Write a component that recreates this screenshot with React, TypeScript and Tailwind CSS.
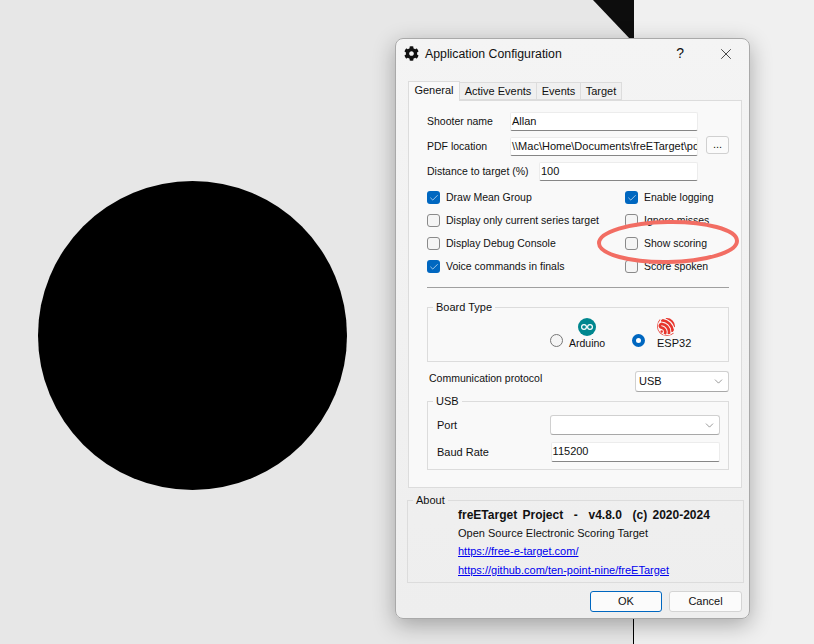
import { ChevronDown, Check, X } from "lucide-react";
import { FaCog } from "react-icons/fa";
import { SiEspressif } from "react-icons/si";
import type { ReactNode } from "react";

function CheckRow({ label, checked = false }: { label: string; checked?: boolean }) {
  return (
    <div className="flex items-center gap-[6px] h-[23px]">
      {checked ? (
        <div className="w-[13px] h-[13px] rounded-[3px] bg-[#0067c0] flex items-center justify-center">
          <Check size={10} strokeWidth={1.5} className="text-white" />
        </div>
      ) : (
        <div className="w-[13px] h-[13px] rounded-[3px] border border-[#8a8a8a] bg-[#f5f5f5]" />
      )}
      <span className="text-[10.5px]">{label}</span>
    </div>
  );
}

function Input({ value, className }: { value: string; className: string }) {
  return (
    <div
      className={`h-[19px] bg-white border-b border-b-[#868686] border-t border-x border-[#ececec] rounded-[2px] pl-[1px] leading-[17px] overflow-hidden whitespace-nowrap ${className}`}
    >
      {value}
    </div>
  );
}

function Select({ value, className }: { value: string; className: string }) {
  return (
    <div
      className={`bg-white border border-[#d0d0d0] border-b-[#a8a8a8] rounded-[3px] pl-[3px] pr-[3px] flex items-center justify-between ${className}`}
    >
      <span>{value}</span>
      <ChevronDown size={13} strokeWidth={1} className="text-[#444]" />
    </div>
  );
}

function Group({
  title,
  className,
  legendClass = "bg-[#f9f9f9]",
  children,
}: {
  title: string;
  className: string;
  legendClass?: string;
  children: ReactNode;
}) {
  return (
    <div className={`relative border border-[#dcdcdc] ${className}`}>
      <span className={`absolute -top-[9px] left-[5px] px-[3px] leading-[16px] ${legendClass}`}>{title}</span>
      {children}
    </div>
  );
}

function Dialog() {
  return (
    <div className="absolute left-[395px] top-[38px] w-[355px] h-[581px] rounded-[8px] border border-[#a9a9a9] bg-linear-to-b from-[#f4f4f4] to-[#eeeeee] shadow-[0_6px_22px_rgba(0,0,0,0.3)] text-[#111] flex flex-col">
      {/* title bar */}
      <div className="h-[29px] flex items-center pl-[8px] shrink-0">
        <FaCog size={15} className="text-[#111]" />
        <span className="ml-[6px] mt-[1px] text-[12.3px]">Application Configuration</span>
        <span className="ml-auto mr-[33px] text-[14px]">?</span>
        <X size={18} strokeWidth={1} className="mr-[14px]" />
      </div>

      {/* tabs */}
      <div className="flex items-end h-[32px] pl-[12px] shrink-0">
        <div className="w-[52px] h-[20px] bg-[#f9f9f9] border border-b-0 border-[#dcdcdc] text-center leading-[17px] relative top-px z-10">General</div>
        <div className="w-[77px] h-[18px] bg-[#f0f0f0] border-y border-r border-[#dcdcdc] text-center leading-[17px]">Active Events</div>
        <div className="w-[44px] h-[18px] bg-[#f0f0f0] border-y border-r border-[#dcdcdc] text-center leading-[17px]">Events</div>
        <div className="w-[41px] h-[18px] bg-[#f0f0f0] border-y border-r border-[#dcdcdc] text-center leading-[17px]">Target</div>
      </div>

      {/* general tab */}
      <div className="ml-[12px] mr-[7px] h-[388px] shrink-0 bg-[#f9f9f9] border border-[#dcdcdc] pl-[18px] pr-[12px] pt-[11px]">
        <div className="flex items-center h-[19px]">
          <span className="w-[83px] text-[10.5px]">Shooter name</span>
          <Input value="Allan" className="w-[188px]" />
        </div>
        <div className="flex items-center h-[19px] mt-[6px]">
          <span className="w-[83px] text-[10.5px]">PDF location</span>
          <Input value="\\Mac\Home\Documents\freETarget\pdf" className="w-[188px]" />
          <div className="ml-[8px] w-[23px] h-[18px] -mt-[3px] bg-[#fbfbfb] border border-[#d0d0d0] rounded-[3px] text-center leading-[15px]">...</div>
        </div>
        <div className="flex items-center h-[19px] mt-[6px]">
          <span className="w-[112px] whitespace-nowrap text-[10.5px]">Distance to target (%)</span>
          <Input value="100" className="w-[159px]" />
        </div>

        <div className="grid grid-cols-[198px_1fr] mt-[5px]">
          <CheckRow label="Draw Mean Group" checked />
          <CheckRow label="Enable logging" checked />
          <CheckRow label="Display only current series target" />
          <CheckRow label="Ignore misses" />
          <CheckRow label="Display Debug Console" />
          <CheckRow label="Show scoring" />
          <CheckRow label="Voice commands in finals" checked />
          <CheckRow label="Score spoken" />
        </div>

        <div className="h-px bg-[#a0a0a0] mt-[9px]" />

        {/* board type */}
        <Group title="Board Type" className="h-[55px] mt-[19px] flex">
          <div className="ml-[122px] flex items-center gap-[6px] w-[82px]">
            <div className="w-[13px] h-[13px] rounded-full border border-[#777] bg-[#f5f5f5] mt-[11px]" />
            <div className="flex flex-col items-center">
              <svg width="18" height="18" viewBox="0 0 18 18">
                <circle cx="9" cy="9" r="9" fill="#00878f" />
                <circle cx="6" cy="9" r="2.4" fill="none" stroke="#fff" strokeWidth="1.2" />
                <circle cx="12" cy="9" r="2.4" fill="none" stroke="#fff" strokeWidth="1.2" />
              </svg>
              <span className="leading-[15px] text-[10.5px]">Arduino</span>
            </div>
          </div>
          <div className="-mt-[1px] flex items-center gap-[12px]">
            <div className="w-[13px] h-[13px] rounded-full border-[4px] border-[#0067c0] bg-white mt-[13px]" />
            <div className="flex flex-col items-start">
              <SiEspressif size={18} className="text-[#e7352c]" />
              <span className="leading-[15px]">ESP32</span>
            </div>
          </div>
        </Group>

        <div className="flex justify-between mt-[9px] h-[21px] pl-[2px]">
          <span className="leading-[14px] text-[10.5px]">Communication protocol</span>
          <Select value="USB" className="w-[94px] h-[21px]" />
        </div>

        {/* usb */}
        <Group title="USB" className="h-[69px] mt-[9px] pl-[9px] pr-[8px] pt-[13px]">
          <div className="flex items-center h-[20px]">
            <span className="w-[113px]">Port</span>
            <Select value="" className="w-[171px] h-[20px]" />
          </div>
          <div className="flex items-center h-[20px] mt-[7px]">
            <span className="w-[114px]">Baud Rate</span>
            <Input value="115200" className="w-[170px] h-[20px]" />
          </div>
        </Group>
      </div>

      {/* about */}
      <Group
        title="About"
        legendClass="bg-[#efefef]"
        className="ml-[11px] mr-[5px] mt-[12px] h-[83px] shrink-0 pl-[50px] pt-[6px]"
      >
        <div className="font-bold text-[12px] h-[17px] leading-[16px] [word-spacing:2px]">freETarget Project&nbsp; -&nbsp; v4.8.0&nbsp; (c) 2020-2024</div>
        <div className="h-[18px] leading-[18px]">Open Source Electronic Scoring Target</div>
        <div className="h-[19px] leading-[18px] text-[#0000ee] underline">https://free-e-target.com/</div>
        <div className="h-[18px] leading-[18px] text-[#0000ee] underline">https://github.com/ten-point-nine/freETarget</div>
      </Group>

      {/* buttons */}
      <div className="flex justify-end gap-[7px] mt-[8px] pr-[7px]">
        <div className="w-[72px] h-[21px] bg-[#fbfbfb] border border-[#0067c0] rounded-[3px] text-center leading-[19px]">OK</div>
        <div className="w-[73px] h-[21px] bg-[#fbfbfb] border border-[#d4d4d4] rounded-[3px] text-center leading-[19px]">Cancel</div>
      </div>
    </div>
  );
}

export default function App() {
  return (
    <div className="relative w-[814px] h-[644px] overflow-hidden flex text-[11px] font-['Liberation_Sans',sans-serif]">
      {/* target behind the dialog */}
      <div className="w-[633px] h-full bg-[#e7e7e7] pl-[38px] pt-[181px] shrink-0">
        <div className="w-[309px] h-[309px] rounded-full bg-black" />
      </div>
      <div className="w-px h-full bg-black shrink-0" />
      <div className="flex-1 h-full bg-[#f0f0f0]" />
      <svg className="absolute left-[590px] top-0" width="44" height="40" viewBox="0 0 44 40">
        <polygon points="3,0 44,0 44,40 41,40" fill="#0d0d0d" />
      </svg>

      <Dialog />

      {/* annotation ring */}
      <svg className="absolute left-[590px] top-[215px]" width="160" height="58" viewBox="0 0 160 58">
        <ellipse cx="78" cy="27" rx="69" ry="20" fill="none" stroke="#f26d63" strokeWidth="4" transform="rotate(-1 78 27)" />
      </svg>
    </div>
  );
}
